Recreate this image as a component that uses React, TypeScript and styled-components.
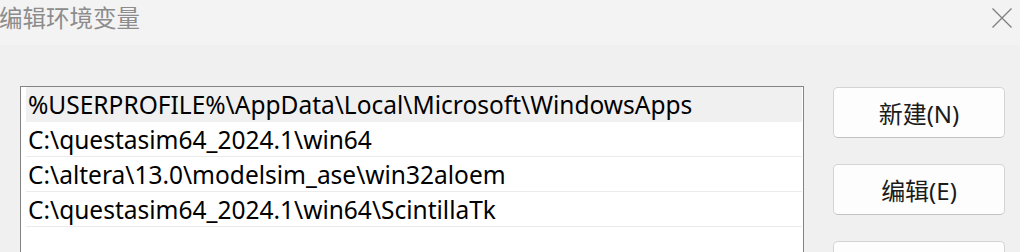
import React from "react";
import styled, { createGlobalStyle } from "styled-components";

const GlobalStyle = createGlobalStyle`
  html, body {
    margin: 0;
    padding: 0;
    background: #f0f0f0;
    overflow: hidden;
  }
  body {
    font-family: "Noto Sans", "Noto Sans CJK SC", sans-serif;
  }
`;

const Window = styled.div`
  width: 1020px;
  height: 252px;
  background: #f0f0f0;
  overflow: hidden;
  display: flex;
  flex-direction: column;
`;

const TitleBar = styled.div`
  height: 45px;
  flex: none;
  background: #f3f3f3;
  display: flex;
  align-items: flex-start;
  justify-content: space-between;
`;

const Title = styled.div`
  font-family: "Noto Sans CJK SC", sans-serif;
  font-size: 23.5px;
  line-height: 34px;
  color: #8c8c8c;
  margin-left: -1px;
`;

const CloseButton = styled.div`
  width: 20px;
  height: 20px;
  margin: 8px 8px 0 0;
  display: flex;
  align-items: center;
  justify-content: center;
`;

const Body = styled.div`
  display: flex;
  align-items: flex-start;
  gap: 29px;
  padding: 41px 0 0 20px;
`;

const ListBox = styled.div`
  width: 784px;
  height: 300px;
  flex: none;
  border: 1px solid #848484;
  background: #ffffff;
  padding: 0 1px 0 5px;
  box-sizing: border-box;
  display: flex;
  flex-direction: column;
`;

const Row = styled.div<{ $selected?: boolean }>`
  height: 35px;
  box-sizing: border-box;
  border-bottom: 1px solid ${(p) => (p.$selected ? "#f0f0f0" : "#ebebeb")};
  background: ${(p) => (p.$selected ? "#f0f0f0" : "#ffffff")};
  display: flex;
  align-items: center;
  padding-left: 2px;
  font-family: "Noto Sans", sans-serif;
  font-size: 24.5px;
  color: #000000;
  white-space: nowrap;
`;

const ButtonColumn = styled.div`
  display: flex;
  flex-direction: column;
  gap: 26px;
  padding-top: 1px;
`;

const Button = styled.div`
  width: 172px;
  height: 51px;
  box-sizing: border-box;
  border: 1px solid #d4d4d4;
  border-bottom-color: #c2c2c2;
  border-radius: 5px;
  background: #fdfdfd;
  display: flex;
  align-items: center;
  justify-content: center;
  font-family: "Noto Sans", "Noto Sans CJK SC", sans-serif;
  font-size: 24px;
  color: #1b1b1b;
`;

const paths = [
  "%USERPROFILE%\\AppData\\Local\\Microsoft\\WindowsApps",
  "C:\\questasim64_2024.1\\win64",
  "C:\\altera\\13.0\\modelsim_ase\\win32aloem",
  "C:\\questasim64_2024.1\\win64\\ScintillaTk",
];

export default function App() {
  return (
    <>
      <GlobalStyle />
      <Window>
        <TitleBar>
          <Title>编辑环境变量</Title>
          <CloseButton>
            <svg width="20" height="20" viewBox="0 0 20 20">
              <path d="M0.5 0.5 L19.5 19.5 M19.5 0.5 L0.5 19.5" stroke="#7f7f7f" strokeWidth="1.3" />
            </svg>
          </CloseButton>
        </TitleBar>
        <Body>
          <ListBox>
            {paths.map((p, i) => (
              <Row key={i} $selected={i === 0}>
                {p}
              </Row>
            ))}
          </ListBox>
          <ButtonColumn>
            <Button>新建(N)</Button>
            <Button>编辑(E)</Button>
            <Button>浏览(B)...</Button>
          </ButtonColumn>
        </Body>
      </Window>
    </>
  );
}
